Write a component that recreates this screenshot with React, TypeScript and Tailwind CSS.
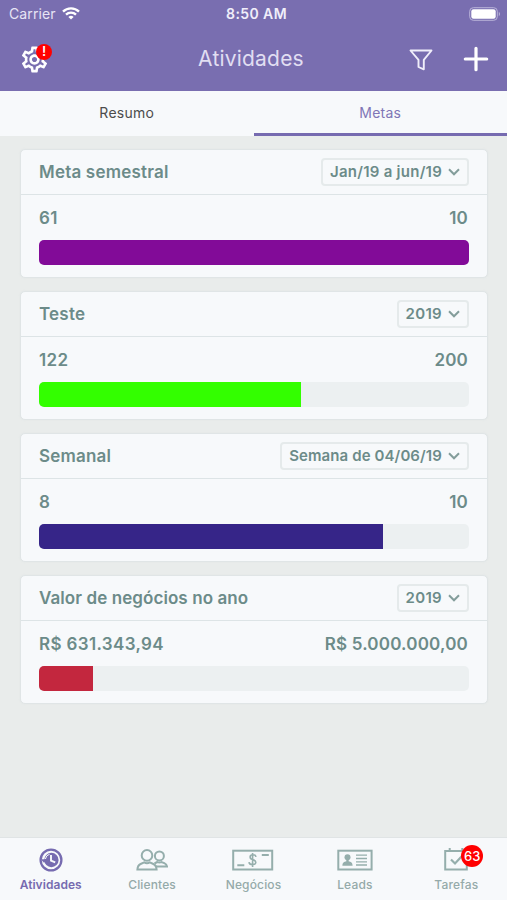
import { MdOutlineSettings } from 'react-icons/md'

interface Goal {
    title: string
    period: string
    current: string
    target: string
    percent: number
    barClass: string
    titleClass: string
    periodClass: string
}

const goals: Goal[] = [
    { title: 'Meta semestral', period: 'Jan/19 a jun/19', current: '61', target: '10', percent: 100, barClass: 'bg-[#820b98]', titleClass: 'tracking-[0.2px]', periodClass: 'tracking-[0.25px]' },
    { title: 'Teste', period: '2019', current: '122', target: '200', percent: 61, barClass: 'bg-[#33ff00]', titleClass: 'tracking-[0.2px]', periodClass: 'tracking-[0.3px]' },
    { title: 'Semanal', period: 'Semana de 04/06/19', current: '8', target: '10', percent: 80, barClass: 'bg-[#362588]', titleClass: 'tracking-[0.2px]', periodClass: 'tracking-[0.1px]' },
    { title: 'Valor de negócios no ano', period: '2019', current: 'R$ 631.343,94', target: 'R$ 5.000.000,00', percent: 12.6, barClass: 'bg-[#c3273e]', titleClass: 'tracking-[0.08px]', periodClass: 'tracking-[0.3px]' },
]

function WifiIcon() {
    return (
        <svg width="18" height="13" viewBox="0 0 18 13" fill="none" stroke="#fff" strokeWidth="2.3">
            <path d="M1 4.6a11.3 11.3 0 0 1 16 0" />
            <path d="M4 7.6a7.1 7.1 0 0 1 10 0" />
            <path d="M9 12.6l-2.6-2.7a3.8 3.8 0 0 1 5.2 0z" fill="#fff" stroke="none" />
        </svg>
    )
}

function BatteryIcon() {
    return (
        <svg width="32" height="14" viewBox="0 0 32 14" fill="none">
            <rect x="0.7" y="0.7" width="27.6" height="12.6" rx="3.6" stroke="#b9b3d9" strokeWidth="1" />
            <rect x="2.3" y="2.3" width="24.4" height="9.4" rx="2.2" fill="#fff" />
            <path d="M29.8 4.8c1.6.7 1.6 3.7 0 4.4z" fill="#b9b3d9" />
        </svg>
    )
}

function ActivityIcon() {
    return (
        <svg width="24" height="24" viewBox="0 0 24 24" fill="none" stroke="#766bb0">
            <circle cx="12" cy="12" r="10.4" strokeWidth="2.3" />
            <circle cx="12.4" cy="12" r="7.2" fill="#766bb0" stroke="none" />
            <path d="M1.8 11.2l3.2 3.6 3-3.6z" fill="#766bb0" stroke="none" />
            <path d="M6.4 11a5.8 5.8 0 0 1 4.2-4.8" stroke="#f7f9fb" strokeWidth="1" />
            <path d="M12 7v5.6l4.2 1.8" stroke="#f7f9fb" strokeWidth="1.9" />
        </svg>
    )
}

function ClientsIcon() {
    return (
        <svg width="32" height="24" viewBox="0 0 32 24" fill="none" stroke="#95aeac" strokeWidth="2">
            <circle cx="11" cy="7.4" r="5.3" />
            <path d="M1.4 21.6c.2-3 .9-4.6 3.2-5.6l3.6-1.6q2.8 1.8 5.6 0l3.6 1.6c2.3 1 3 2.6 3.2 5.6z" />
            <circle cx="23.4" cy="7.9" r="4.5" />
            <path d="M18.5 15.5l2.8-1.5q2.1 1.2 4.2 0l2.8 1.2c1.8.8 2.5 1.8 2.7 3.2H20" />
        </svg>
    )
}

function DealsIcon() {
    return (
        <svg width="42" height="24" viewBox="0 0 42 24" fill="none" stroke="#95aeac" strokeWidth="2">
            <rect x="1.2" y="2.7" width="39" height="18.8" />
            <path d="M5.3 17.2h7M29.8 7h7" />
            <path d="M24 8.8c-.3-1.5-1.3-2-3-2-3.8 0-3.7 4-.4 4.8 4.3 1 4.3 5-.1 5-2.2 0-3.3-.8-3.5-2.5M20.6 5v14" strokeWidth="1.6" />
        </svg>
    )
}

function LeadsIcon() {
    return (
        <svg width="36" height="24" viewBox="0 0 36 24" fill="none" stroke="#95aeac" strokeWidth="2">
            <rect x="1.3" y="2.7" width="33.3" height="18.8" />
            <circle cx="10.5" cy="9.2" r="3" fill="#95aeac" stroke="none" />
            <path d="M5.4 17.8c0-3.6 1.7-3.9 4-4.6l-.3-2.2h2.8l-.3 2.2c2.3.7 4 1 4 4.6z" fill="#95aeac" stroke="none" />
            <path d="M19 7.2h11M19 10.5h11M19 13.8h11M19 17h11" strokeWidth="1.3" />
        </svg>
    )
}

function TasksIcon() {
    return (
        <svg width="24" height="24" viewBox="0 0 24 24" fill="none" stroke="#95aeac" strokeWidth="2">
            <path d="M1.2 3.1h21.6v18.3H1.2zM5.7 0v4M18.3 0v4" />
            <path d="M7 11.5l4 4 7-7.5" strokeWidth="2.2" />
        </svg>
    )
}

function GoalCard({ goal }: { goal: Goal }) {
    return (
        <section className="h-[129px] rounded-[5px] border border-[#e0e5e6] bg-[#f7f9fb] font-semibold text-[#6c8b89] shadow-[0_0_2px_#dfe5e5]">
            <div className="flex h-[45px] items-center justify-between border-b border-[#dde4e6] px-[18px]">
                <h2 className={`pt-px text-[17px] ${goal.titleClass}`}>{goal.title}</h2>
                <button className="flex h-[28px] items-center gap-[6px] rounded-[4px] border-2 border-[#e5eaeb] px-[7px] text-[15px]">
                    <span className={goal.periodClass}>{goal.period}</span>
                    <svg width="12" height="8" viewBox="0 0 12 8" fill="none" stroke="#839d9b" strokeWidth="2">
                        <path d="M1 1.3l5 5 5-5" />
                    </svg>
                </button>
            </div>
            <div className="flex h-[45px] items-center justify-between pt-[2px] pr-[19px] pl-[18px] text-[17px]">
                <span className="tracking-[0.36px]">{goal.current}</span>
                <span className="tracking-[0.2px]">{goal.target}</span>
            </div>
            <div className="mx-[18px] h-[25px] overflow-hidden rounded-[5px] bg-[#ecf0f1]">
                <div className={`h-full ${goal.barClass}`} style={{ width: `${goal.percent}%` }} />
            </div>
        </section>
    )
}

export default function App() {
    return (
        <div className="flex h-[900px] w-[507px] flex-col overflow-hidden bg-[#e9eceb] font-['Inter',sans-serif]">
            <header className="h-[91px] shrink-0 bg-[#796eb0] text-white">
                {/* Status bar */}
                <div className="grid h-[27px] grid-cols-3 items-center pr-[6px] pl-[9px] text-[14px]">
                    <div className="flex items-center gap-[6px] text-[#e7e4f5]">
                        <span className="tracking-[0.1px]">Carrier</span>
                        <WifiIcon />
                    </div>
                    <span className="pl-[3px] text-center font-semibold tracking-[0.4px] text-[#f0eefa]">8:50 AM</span>
                    <div className="flex justify-end"><BatteryIcon /></div>
                </div>
                <div className="grid h-[64px] grid-cols-3 items-center pr-[18px] pl-[19px]">
                    <div className="relative w-[31px]">
                        <MdOutlineSettings size={31} />
                        <span className="absolute top-0 left-[17px] flex size-4 items-center justify-center rounded-full bg-[#ff0000] text-[13px] font-semibold">!</span>
                    </div>
                    <h1 className="pr-[6px] text-center text-[21px] tracking-[0.2px] whitespace-nowrap text-[#e1def2]">Atividades</h1>
                    <div className="flex items-center justify-end gap-[30px]">
                        <svg width="24" height="22" viewBox="0 0 24 22" fill="none" stroke="#f0eefa" strokeWidth="1.9" strokeLinejoin="round" className="mt-[2px]">
                            <path d="M1.5 1.5h21l-7.7 9.4v9.4l-5.3-2.3v-7.1z" />
                        </svg>
                        <svg width="26" height="26" viewBox="0 0 26 26" stroke="#fff" strokeWidth="3.2" strokeLinecap="round">
                            <path d="M13 2.3v21.4M2.3 13h21.4" />
                        </svg>
                    </div>
                </div>
            </header>
            <nav className="grid h-[45px] shrink-0 grid-cols-2 bg-[#f7f9fb] text-[14px]">
                <button className="border-b-3 border-transparent tracking-[0.25px] text-[#4c4c4c]">Resumo</button>
                <button className="border-b-3 border-[#766bb0] tracking-[0.25px] text-[#8076b6]">Metas</button>
            </nav>
            <main className="flex flex-1 flex-col gap-[13px] pt-[13px] pr-[19px] pl-5">
                {goals.map((goal) => (
                    <GoalCard key={goal.title} goal={goal} />
                ))}
            </main>
            <footer className="grid h-[63px] shrink-0 grid-cols-5 border-t border-[#e0e4e5] bg-[#f7f9fb] text-[12px] leading-[18px] font-medium tracking-[0.15px] text-[#95aaa9]">
                <div className="flex flex-col items-center pt-[10px] font-semibold tracking-[0.05px] text-[#766bb0]">
                    <ActivityIcon />
                    <span className="mt-[4px]">Atividades</span>
                </div>
                <div className="flex flex-col items-center pt-[10px]">
                    <ClientsIcon />
                    <span className="mt-[4px]">Clientes</span>
                </div>
                <div className="flex flex-col items-center pt-[10px]">
                    <DealsIcon />
                    <span className="mt-[4px]">Negócios</span>
                </div>
                <div className="flex flex-col items-center pt-[10px]">
                    <LeadsIcon />
                    <span className="mt-[4px]">Leads</span>
                </div>
                <div className="flex flex-col items-center pt-[10px]">
                    <div className="relative">
                        <TasksIcon />
                        <span className="absolute -top-[3px] left-[17px] flex size-[22px] items-center justify-center rounded-full bg-[#ff0000] text-[13px] text-white">63</span>
                    </div>
                    <span className="mt-[4px]">Tarefas</span>
                </div>
            </footer>
        </div>
    )
}
